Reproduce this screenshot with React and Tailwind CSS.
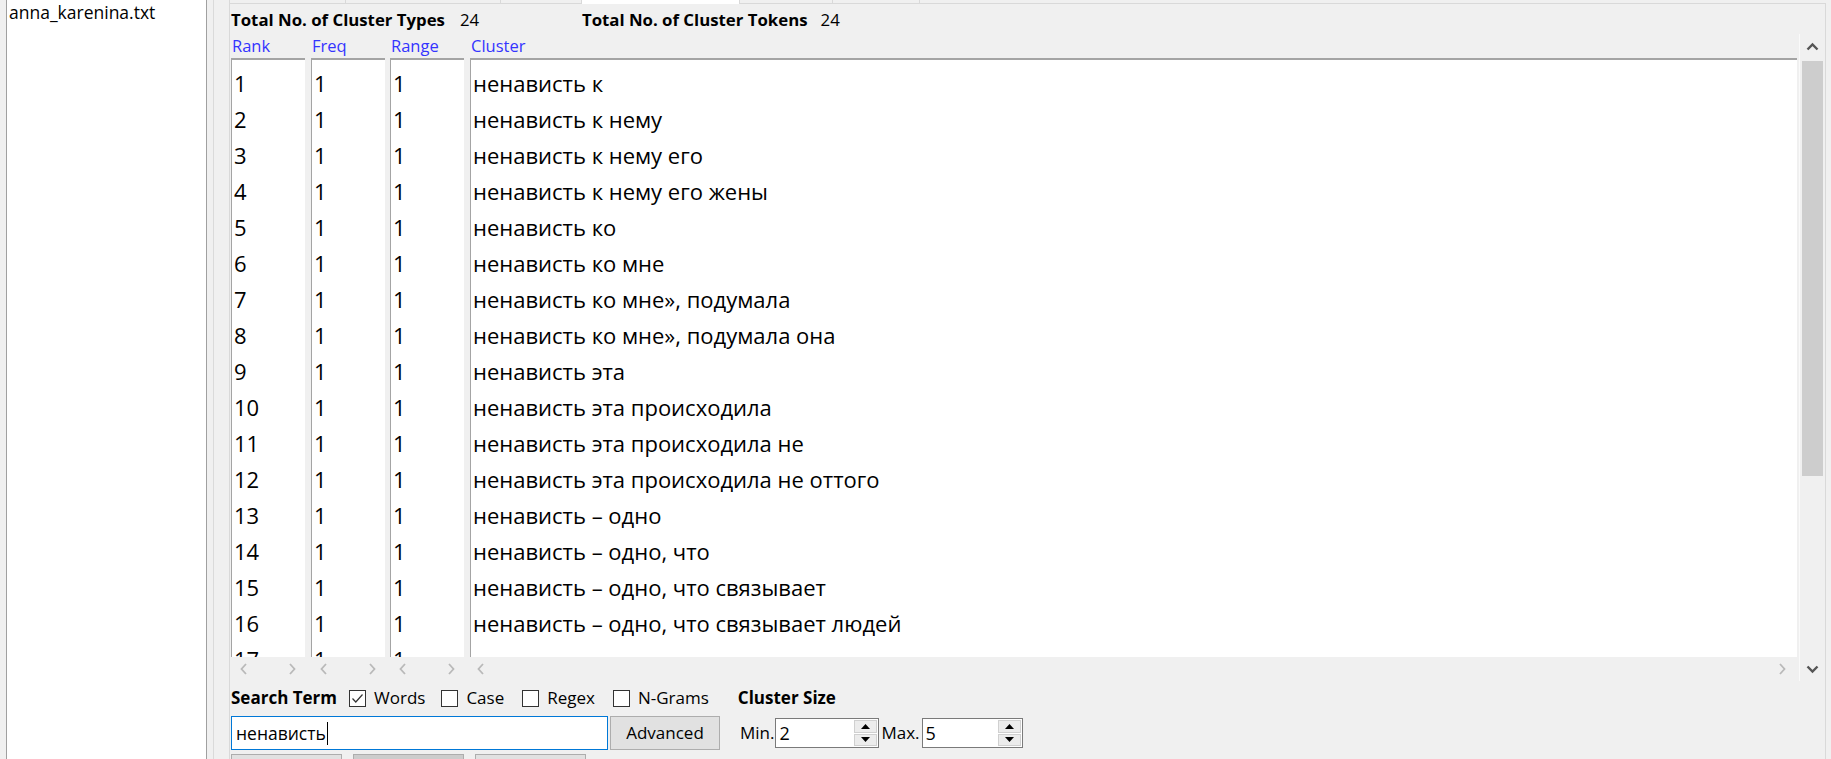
import React from "react";

const rows = [
  "ненависть к",
  "ненависть к нему",
  "ненависть к нему его",
  "ненависть к нему его жены",
  "ненависть ко",
  "ненависть ко мне",
  "ненависть ко мне», подумала",
  "ненависть ко мне», подумала она",
  "ненависть эта",
  "ненависть эта происходила",
  "ненависть эта происходила не",
  "ненависть эта происходила не оттого",
  "ненависть – одно",
  "ненависть – одно, что",
  "ненависть – одно, что связывает",
  "ненависть – одно, что связывает людей",
  "",
];

function HChev({ dir }) {
  return (
    <svg width="9" height="14" viewBox="0 0 9 14" className="text-[#b9b9b9] shrink-0">
      <path
        d={dir === "l" ? "M7 2 L2.5 7 L7 12" : "M2 2 L6.5 7 L2 12"}
        fill="none"
        stroke="currentColor"
        strokeWidth="1.8"
      />
    </svg>
  );
}

function VChev({ dir }) {
  return (
    <svg width="13" height="9" viewBox="0 0 13 9" className="text-[#555555]">
      <path
        d={dir === "u" ? "M1.5 7.5 L6.5 2.5 L11.5 7.5" : "M1.5 1.5 L6.5 6.5 L11.5 1.5"}
        fill="none"
        stroke="currentColor"
        strokeWidth="2.4"
      />
    </svg>
  );
}

function Box({ className, children }) {
  return (
    <div className={"h-[599px] bg-white border-t-2 border-l border-[#a4a4a4] overflow-hidden pt-[5px] pl-[2px] " + className}>
      {children}
    </div>
  );
}

function Cells({ values }) {
  return values.map((v, i) => (
    <div key={i} className="h-[36px] leading-[36px] whitespace-nowrap">
      {v}
    </div>
  ));
}

function CheckBox({ checked }) {
  return (
    <div className="w-[17px] h-[17px] border border-[#333333] bg-white flex items-center justify-center shrink-0">
      {checked && (
        <svg width="13" height="11" viewBox="0 0 13 11">
          <path d="M1.5 5.5 L4.8 9 L11.5 1.5" fill="none" stroke="#333333" strokeWidth="1.2" />
        </svg>
      )}
    </div>
  );
}

function Spin({ value, className }) {
  return (
    <div className={"h-[30px] border border-[#7a7a7a] bg-white flex items-stretch p-[1px] " + className}>
      <div className="flex-1 pl-[2px] leading-[26px] text-[18px]">{value}</div>
      <div className="w-[23px] flex flex-col gap-[1px]">
        <div className="flex-1 bg-[#ececec] border border-[#d0d0d0] flex items-center justify-center">
          <svg width="9" height="5" viewBox="0 0 9 5"><path d="M0 5 L4.5 0 L9 5 Z" fill="#000" /></svg>
        </div>
        <div className="flex-1 bg-[#ececec] border border-[#d0d0d0] flex items-center justify-center">
          <svg width="9" height="5" viewBox="0 0 9 5"><path d="M0 0 L4.5 5 L9 0 Z" fill="#000" /></svg>
        </div>
      </div>
    </div>
  );
}

export default function App() {
  const tabs = [
    { w: 116 },
    { w: 155 },
    { w: 81 },
    { w: 158, sel: true },
    { w: 93 },
    { w: 87 },
    { w: 112 },
  ];
  return (
    <div className="w-[1831px] h-[759px] bg-[#f0f0f0] flex overflow-hidden font-['Open_Sans',sans-serif] text-[17px] text-black">
      {/* file list */}
      <div className="pl-[6px] h-full shrink-0">
        <div className="w-[201px] h-full bg-white border-x border-[#a0a0a0] pl-[2px] text-[17.5px] leading-[24px]">
          anna_karenina.txt
        </div>
      </div>
      {/* splitter */}
      <div className="w-[22px] h-full shrink-0 flex">
        <div className="ml-[6px] w-px h-full bg-[#dadada]" />
      </div>
      {/* tab panel */}
      <div className="w-[1597px] h-full flex flex-col shrink-0">
        {/* tab strip */}
        <div className="h-[4px] flex shrink-0 overflow-hidden">
          {tabs.map((t, i) => (
            <div
              key={i}
              style={{ width: t.w }}
              className={
                "h-[4px] border-l border-[#d9d9d9] " +
                (t.sel ? "bg-white" : "bg-[#f0f0f0] border-b")
              }
            />
          ))}
          <div className="flex-1 border-b border-[#d9d9d9]" />
        </div>
        <div className="flex-1 flex flex-col border-l border-r border-[#d9d9d9] pl-[1px]">
          {/* heading */}
          <div className="h-[30px] pt-[2px] flex items-center font-bold text-[16.8px] shrink-0">
            <span>Total No. of Cluster Types</span>
            <span className="font-normal ml-[15px] w-[122px]">24</span>
            <span>Total No. of Cluster Tokens</span>
            <span className="font-normal ml-[13px]">24</span>
          </div>
          <div className="flex shrink-0">
            <div className="flex-1 flex flex-col mr-[2px] min-w-0">
              <div className="h-[24px] flex text-[#3434ff] text-[16.5px] leading-[24px] items-center">
                <div className="w-[74px] pl-[1px]">Rank</div>
                <div className="w-[74px] ml-[6px] pl-[1px]">Freq</div>
                <div className="w-[74px] ml-[5px] pl-[1px]">Range</div>
                <div className="flex-1 ml-[6px] pl-[1px]">Cluster</div>
              </div>
              <div className="flex text-[22px]">
                <Box className="w-[74px]">
                  <Cells values={rows.map((_, i) => String(i + 1))} />
                </Box>
                <Box className="w-[74px] ml-[6px]">
                  <Cells values={rows.map(() => "1")} />
                </Box>
                <Box className="w-[74px] ml-[5px]">
                  <Cells values={rows.map(() => "1")} />
                </Box>
                <Box className="flex-1 ml-[6px]">
                  <Cells values={rows} />
                </Box>
              </div>
              <div className="h-[24px] flex items-center">
                <div className="w-[74px] px-[8px] flex justify-between"><HChev dir="l" /><HChev dir="r" /></div>
                <div className="w-[74px] ml-[6px] px-[8px] flex justify-between"><HChev dir="l" /><HChev dir="r" /></div>
                <div className="w-[74px] ml-[5px] px-[8px] flex justify-between"><HChev dir="l" /><HChev dir="r" /></div>
                <div className="flex-1 ml-[6px] pl-[6px] pr-[10px] flex justify-between"><HChev dir="l" /><HChev dir="r" /></div>
              </div>
            </div>
            {/* vertical scrollbar */}
            <div className="w-[26px] h-[647px] border-l border-[#fafafa] flex flex-col">
              <div className="h-[25px] flex items-center justify-center"><VChev dir="u" /></div>
              <div className="h-[598px] px-[2px] pt-[2px]">
                <div className="h-[415px] bg-[#cdcdcd]" />
              </div>
              <div className="h-[24px] flex items-center justify-center"><VChev dir="d" /></div>
            </div>
          </div>
          {/* search term row */}
          <div className="h-[34px] flex items-center shrink-0">
            <span className="font-bold">Search Term</span>
            <div className="ml-[12px]"><CheckBox checked /></div>
            <span className="ml-[8px]">Words</span>
            <div className="ml-[16px]"><CheckBox /></div>
            <span className="ml-[8px]">Case</span>
            <div className="ml-[18px]"><CheckBox /></div>
            <span className="ml-[8px]">Regex</span>
            <div className="ml-[18px]"><CheckBox /></div>
            <span className="ml-[8px]">N-Grams</span>
            <span className="ml-[29px] font-bold">Cluster Size</span>
          </div>
          {/* input row */}
          <div className="h-[34px] mt-[1px] flex items-center shrink-0">
            <div className="w-[377px] h-[34px] border border-[#0078d7] bg-white flex items-center pl-[4px] text-[17.5px]">
              <span>ненависть</span>
              <span className="w-px h-[23px] bg-black ml-[1px]" />
            </div>
            <div className="ml-[2px] w-[110px] h-[34px] bg-[#e1e1e1] border border-[#adadad] flex items-center justify-center">
              Advanced
            </div>
            <span className="ml-[20px]">Min.</span>
            <Spin value="2" className="w-[104px] ml-[1px]" />
            <span className="ml-[2px]">Max.</span>
            <Spin value="5" className="w-[101px] ml-[2px]" />
          </div>
          {/* buttons row */}
          <div className="mt-[4px] flex shrink-0">
            <div className="w-[111px] h-[30px] bg-[#e1e1e1] border border-[#adadad]" />
            <div className="w-[111px] h-[30px] ml-[11px] bg-[#cccccc] border border-[#adadad]" />
            <div className="w-[111px] h-[30px] ml-[11px] bg-[#e1e1e1] border border-[#adadad]" />
          </div>
        </div>
      </div>
    </div>
  );
}
